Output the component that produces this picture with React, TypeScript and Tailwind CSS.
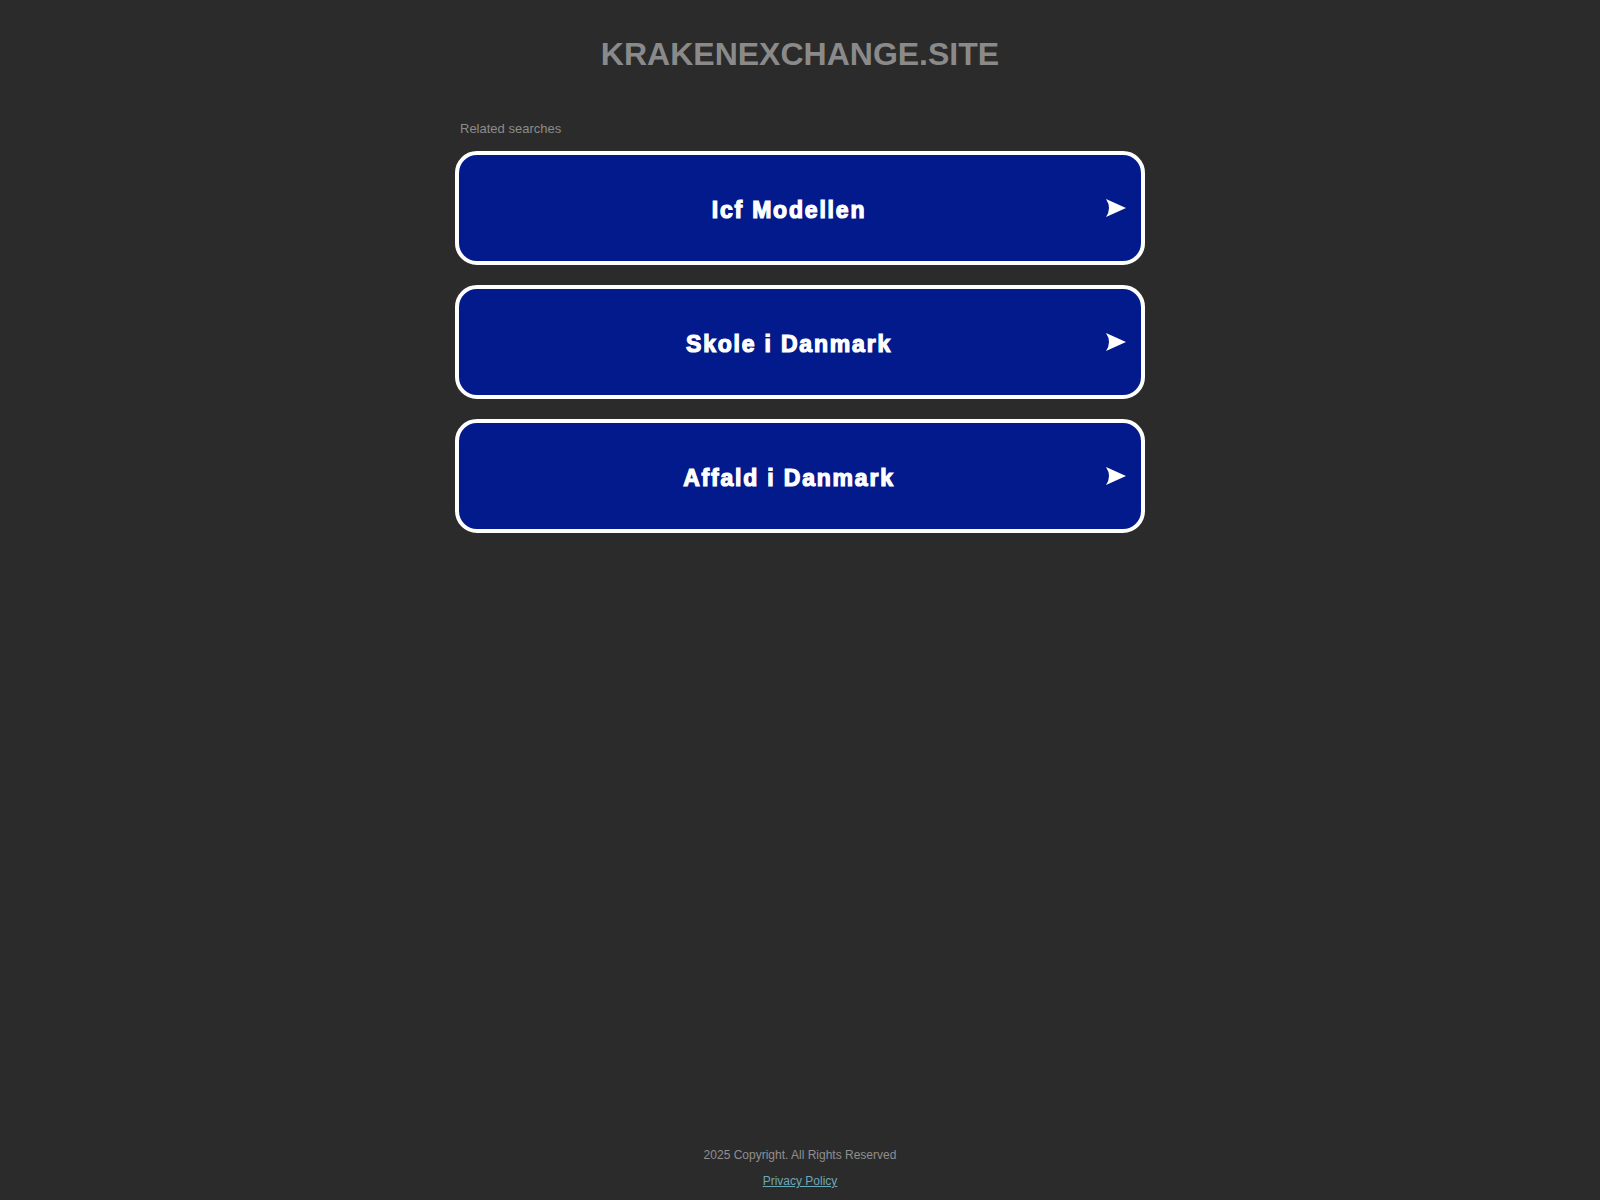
import React from "react";

const items = ["Icf Modellen", "Skole i Danmark", "Affald i Danmark"];

function Arrow() {
  return (
    <svg width="20" height="18" viewBox="0 0 20 18" className="block">
      <path d="M0 0 L20 9 L0 18 Q6 9 0 0 Z" fill="#ffffff" />
    </svg>
  );
}

export default function App() {
  return (
    <div
      className="min-h-screen flex flex-col bg-[#2b2b2b]"
      style={{ fontFamily: '"Liberation Sans", Arial, sans-serif' }}
    >
      <header className="pt-[36px] text-center">
        <h1 className="text-[32px] leading-[36px] font-bold text-[#8a8a8a] m-0">
          KRAKENEXCHANGE.SITE
        </h1>
      </header>
      <main className="w-[690px] mx-auto mt-[49px]">
        <div className="pl-[5px] text-[13px] leading-[15px] text-[#8c8c8c]">
          Related searches
        </div>
        <div className="mt-[15px] flex flex-col gap-[20px]">
          {items.map((t) => (
            <a
              key={t}
              href="#"
              className="h-[114px] rounded-[22px] border-[4px] border-white bg-[#021a8b] flex items-center pl-[13px]"
            >
              <span className="flex-1 text-center pt-[4px] text-white text-[23px] leading-[26px] font-bold tracking-[1.8px] [-webkit-text-stroke:1.2px_white]">
                {t}
              </span>
              <span className="mr-[15px] w-[20px]">
                <Arrow />
              </span>
            </a>
          ))}
        </div>
      </main>
      <footer className="mt-auto pb-[12px] text-center text-[12px] leading-[13px]">
        <div className="text-[#8f8f8f]">2025 Copyright. All Rights Reserved</div>
        <div className="mt-[13px]">
          <a href="#" className="text-[#6aa9b8] underline">
            Privacy Policy
          </a>
        </div>
      </footer>
    </div>
  );
}
